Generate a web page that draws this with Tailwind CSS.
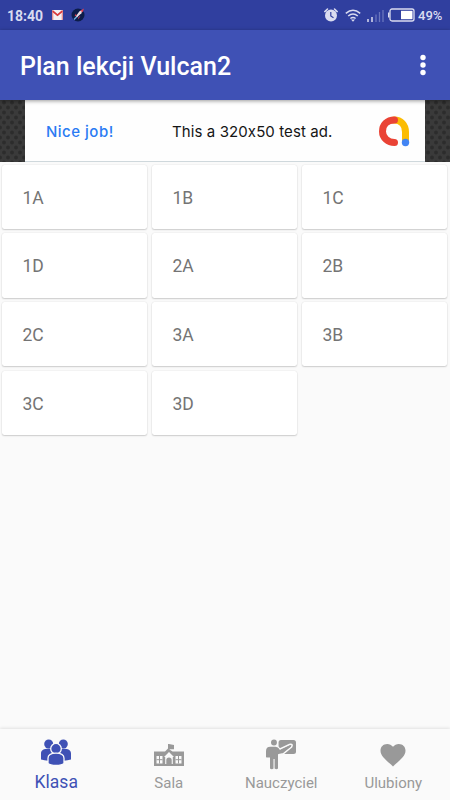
<!DOCTYPE html>
<html lang="pl">
<head>
<meta charset="utf-8">
<title>Plan lekcji Vulcan2</title>
<script src="https://cdn.jsdelivr.net/npm/@tailwindcss/browser@4"></script>
</head>
<body class="bg-[#fafafa] font-[Roboto,sans-serif]">
<div class="flex flex-col w-[450px] h-[800px] overflow-hidden">
  <!-- Status bar -->
  <header class="flex shrink-0 items-center h-[30px] bg-[#303f9f] text-[#dadcf0] pl-[7px] pr-[8px]">
    <span class="w-[37px] text-[14px] leading-[30px] font-bold whitespace-nowrap pt-px">18:40</span>
    <svg class="ml-[8px]" width="11" height="10" viewBox="0 0 11 10"><rect width="11" height="10" rx="1" fill="#f4f0f2"/><path d="M.7 10V1l4.800 4.200L10.300 1v9" fill="none" stroke="#e08a8c" stroke-width="1.200"/><path d="M.7 1.200 5.500 5.200 10.300 1.200" fill="none" stroke="#d93a3c" stroke-width="1.600"/></svg>
    <svg class="ml-[8px]" width="14" height="14" viewBox="0 0 14 14"><circle cx="7" cy="7" r="6.500" fill="#0c1c49"/><path d="M3 11.500 6.500 8" stroke="#6caee0" stroke-width="1.500"/><path d="M5 8 8.500 3.300l3.200-1.600-1.300 3.600-4.400 4z" fill="#e8dce4"/><path d="m9.300 2.700 3.700-2.200-1.300 3.700zM5 5.500 3.500 8.200l2-.3zM7.500 9l-.5 2.500L9.500 8z" fill="#dd4050"/></svg>
    <div class="ml-auto flex items-center">
      <svg class="mr-px" width="14" height="14" viewBox="0 0 14 14"><circle cx="7" cy="7.500" r="6" fill="#dadcf0"/><path d="M.8 3.600 3.500 1M13.200 3.600 10.500 1" stroke="#dadcf0" stroke-width="1.500" stroke-linecap="round"/><path d="M6.800 4v4l2.700 1.700" fill="none" stroke="#303f9f" stroke-width="1.200"/></svg>
      <svg class="ml-[6px]" width="16" height="13" viewBox="0 0 16 13"><g fill="none" stroke="#dadcf0" stroke-width="1.500"><path d="M.8 4.300Q8-1.700 15.200 4.300M3.200 7Q8 3 12.800 7M5.400 9.500Q8 7.500 10.600 9.500"/></g><path d="M6 10.500h4L8 12.700z" fill="#dadcf0"/></svg>
      <svg class="ml-[6px]" width="17" height="13" viewBox="0 0 17 13"><path d="M1 10v3M5 8v5" stroke="#dadcf0" stroke-width="1.500"/><path d="M9 5.500V13M12.500 3v10M16 1v12" stroke="#6a76be" stroke-width="1.300"/></svg>
      <svg class="ml-[4px]" width="27" height="14" viewBox="0 0 27 14"><rect x="2" y="1" width="24" height="12" rx="2" fill="none" stroke="#dadcf0" stroke-width="1.300"/><path d="M.7 4.500v5" stroke="#dadcf0" stroke-width="1.400"/><path d="M13 2.800h11.500v8.400H13z" fill="#fff"/></svg>
      <span class="ml-[3px] w-[24px] text-[13px] leading-[30px] font-medium whitespace-nowrap pt-px">49%</span>
    </div>
  </header>
  <!-- App bar -->
  <div class="relative z-10 flex shrink-0 items-center justify-between h-[70px] bg-[#3f51b5] pl-[20px] pr-[24.5px] text-white shadow-[0_1px_4px_rgba(0,0,0,0.4)]">
    <h1 class="text-[25px] font-medium whitespace-nowrap pt-[3px]">Plan lekcji Vulcan2</h1>
    <svg width="6" height="22" viewBox="0 0 6 22" fill="#fff"><circle cx="3" cy="3.500" r="2.700"/><circle cx="3" cy="11" r="2.700"/><circle cx="3" cy="18.500" r="2.700"/></svg>
  </div>
  <!-- Ad banner -->
  <div class="relative flex shrink-0 justify-center h-[62px] bg-[#373737]">
    <svg class="absolute inset-0" width="450" height="62"><defs><pattern id="hex" width="8" height="10" patternUnits="userSpaceOnUse"><path d="M0 0h8v10H0z" fill="#3a3a3a"/><g fill="#2c2c2c"><circle cx="4" cy="2.500" r="2"/><circle cx="0" cy="7.500" r="2"/><circle cx="8" cy="7.500" r="2"/></g></pattern></defs><rect width="450" height="62" fill="url(#hex)"/></svg>
    <div class="relative flex items-center w-[400px] h-[62px] bg-[#fefefe] border-b border-[#cfd8dc] font-[Inter,sans-serif] text-[15px] [font-feature-settings:'calt'_0] pl-[21px] pt-[3px]">
      <span class="w-[126px] font-medium text-[#2a7bf3] tracking-[0.5px] whitespace-nowrap">Nice job!</span>
      <span class="w-[206px] text-[#151515] tracking-[0.1px] whitespace-nowrap">This a 320x50 test ad.</span>
      <svg class="mb-[2px]" width="32" height="32" viewBox="0 0 32 32" fill="none" stroke-width="7" stroke-linecap="round"><path d="M16 5C23 5 27.500 10 27.500 17v8" stroke="#fbbc04"/><path d="M16.500 5C9 5 4.500 10 4.500 16.500S10 27.500 16.500 27.500" stroke="#ea4335"/><circle cx="27.500" cy="27.500" r="3.700" fill="#4285f4"/></svg>
    </div>
  </div>
  <!-- Class grid -->
  <main class="grow">
    <div class="grid grid-cols-3 auto-rows-[64.3px] gap-x-[5px] gap-y-[4.5px] pl-[2.4px] pr-[2.6px] pt-[2.5px] text-[17.5px] text-[#747474]">
      <div class="flex items-center pl-[20px] pt-[2px] rounded-[2.5px] bg-white shadow-[0_1px_1.5px_rgba(0,0,0,0.17),0_0_1.5px_rgba(0,0,0,0.12)]">1A</div>
      <div class="flex items-center pl-[20px] pt-[2px] rounded-[2.5px] bg-white shadow-[0_1px_1.5px_rgba(0,0,0,0.17),0_0_1.5px_rgba(0,0,0,0.12)]">1B</div>
      <div class="flex items-center pl-[20px] pt-[2px] rounded-[2.5px] bg-white shadow-[0_1px_1.5px_rgba(0,0,0,0.17),0_0_1.5px_rgba(0,0,0,0.12)]">1C</div>
      <div class="flex items-center pl-[20px] pt-[2px] rounded-[2.5px] bg-white shadow-[0_1px_1.5px_rgba(0,0,0,0.17),0_0_1.5px_rgba(0,0,0,0.12)]">1D</div>
      <div class="flex items-center pl-[20px] pt-[2px] rounded-[2.5px] bg-white shadow-[0_1px_1.5px_rgba(0,0,0,0.17),0_0_1.5px_rgba(0,0,0,0.12)]">2A</div>
      <div class="flex items-center pl-[20px] pt-[2px] rounded-[2.5px] bg-white shadow-[0_1px_1.5px_rgba(0,0,0,0.17),0_0_1.5px_rgba(0,0,0,0.12)]">2B</div>
      <div class="flex items-center pl-[20px] pt-[2px] rounded-[2.5px] bg-white shadow-[0_1px_1.5px_rgba(0,0,0,0.17),0_0_1.5px_rgba(0,0,0,0.12)]">2C</div>
      <div class="flex items-center pl-[20px] pt-[2px] rounded-[2.5px] bg-white shadow-[0_1px_1.5px_rgba(0,0,0,0.17),0_0_1.5px_rgba(0,0,0,0.12)]">3A</div>
      <div class="flex items-center pl-[20px] pt-[2px] rounded-[2.5px] bg-white shadow-[0_1px_1.5px_rgba(0,0,0,0.17),0_0_1.5px_rgba(0,0,0,0.12)]">3B</div>
      <div class="flex items-center pl-[20px] pt-[2px] rounded-[2.5px] bg-white shadow-[0_1px_1.5px_rgba(0,0,0,0.17),0_0_1.5px_rgba(0,0,0,0.12)]">3C</div>
      <div class="flex items-center pl-[20px] pt-[2px] rounded-[2.5px] bg-white shadow-[0_1px_1.5px_rgba(0,0,0,0.17),0_0_1.5px_rgba(0,0,0,0.12)]">3D</div>
    </div>
  </main>
  <!-- Bottom navigation -->
  <nav class="grid grid-cols-4 shrink-0 h-[71px] bg-[#fafafa] shadow-[0_-1px_3px_rgba(0,0,0,0.1)] text-[15px] leading-[20px] text-[#999]">
    <div class="flex flex-col items-center pt-[10px] text-[#3f51b5]">
      <svg width="32" height="28" viewBox="0 0 32 28" fill="#3f51b5"><circle cx="8.700" cy="5" r="4.500"/><circle cx="23.300" cy="5" r="4.500"/><path d="M1 20.500v-6C1 11 4 9.800 8.500 9.800S14 12 14 15v6q-7 1.500-13-.5zM31 20.500v-6c0-3.500-3-4.700-7.500-4.700S18 12 18 15v6q7 1.500 13-.5z"/><g stroke="#fafafa" stroke-width="1.300"><circle cx="16" cy="9.700" r="5.300"/><path d="M8 24.500v-5.200c0-4 3.500-5.200 8-5.200s8 1.200 8 5.200v5.200q-2 2-8 2t-8-2z"/></g></svg>
      <span class="text-[17.5px] leading-[20px] mt-[5px]">Klasa</span>
    </div>
    <div class="flex flex-col items-center pt-[15px]">
      <svg width="30" height="23" viewBox="0 0 30 23" fill="#999"><path d="M0 7.500h11L14 4.500V0h1l5 1v4.200h-4.500v.3l3 2H30V22H0z"/><g fill="#fafafa"><path d="M2.500 12h6v7.500h-6zM21.500 12h6v7.500h-6zM10 13l5-5 5 5h-1.200v7h-7.600v-7z"/></g><path d="M12.300 22v-6q0-2.500 2.700-2.500t2.700 2.500v6z"/><path d="M5.500 12v7.500M2.500 15.700h6M24.500 12v7.500M21.500 15.700h6" stroke="#999" stroke-width="1"/></svg>
      <span class="mt-[6px]">Sala</span>
    </div>
    <div class="flex flex-col items-center pt-[10px]">
      <svg width="30" height="31" viewBox="0 0 30 31" fill="#999"><rect x="12.500" y="1" width="17.500" height="14" rx="2.500"/><path d="M13 10.500 23.500 5.500q4-.8 2 2.500L17 15H13z" stroke="#fafafa" stroke-width="1.600"/><circle cx="8" cy="3.600" r="3" /><path d="M11.500.5v7l3 3" fill="none" stroke="#fafafa" stroke-width="1.200"/><path d="M0 18v-6q0-4.300 4.300-4.300h5.200q2.500 0 4.500 3.300l9.500-4.500q2-.3 1.200 1.200L16 14l-4 1.300V29.500q-1.500 1.500-3.400 0V20H7.500v9.500q-1.700 1.500-3.500 0V18.500H.5z"/></svg>
      <span class="mt-[3px]">Nauczyciel</span>
    </div>
    <div class="flex flex-col items-center pt-[15px] pr-px">
      <svg width="26" height="23" viewBox="0 0 26 23"><path d="M13 22.500 11 20.600C5 15.200.5 11.500.5 6.700.5 2.800 3.300 0 7.200 0 9.500 0 11.600 1.100 13 2.800 14.400 1.100 16.500 0 18.800 0c3.900 0 6.700 2.800 6.700 6.700 0 4.800-4.500 8.500-10.500 13.900z" fill="#999"/></svg>
      <span class="mt-[6px]">Ulubiony</span>
    </div>
  </nav>
</div>
</body>
</html>
